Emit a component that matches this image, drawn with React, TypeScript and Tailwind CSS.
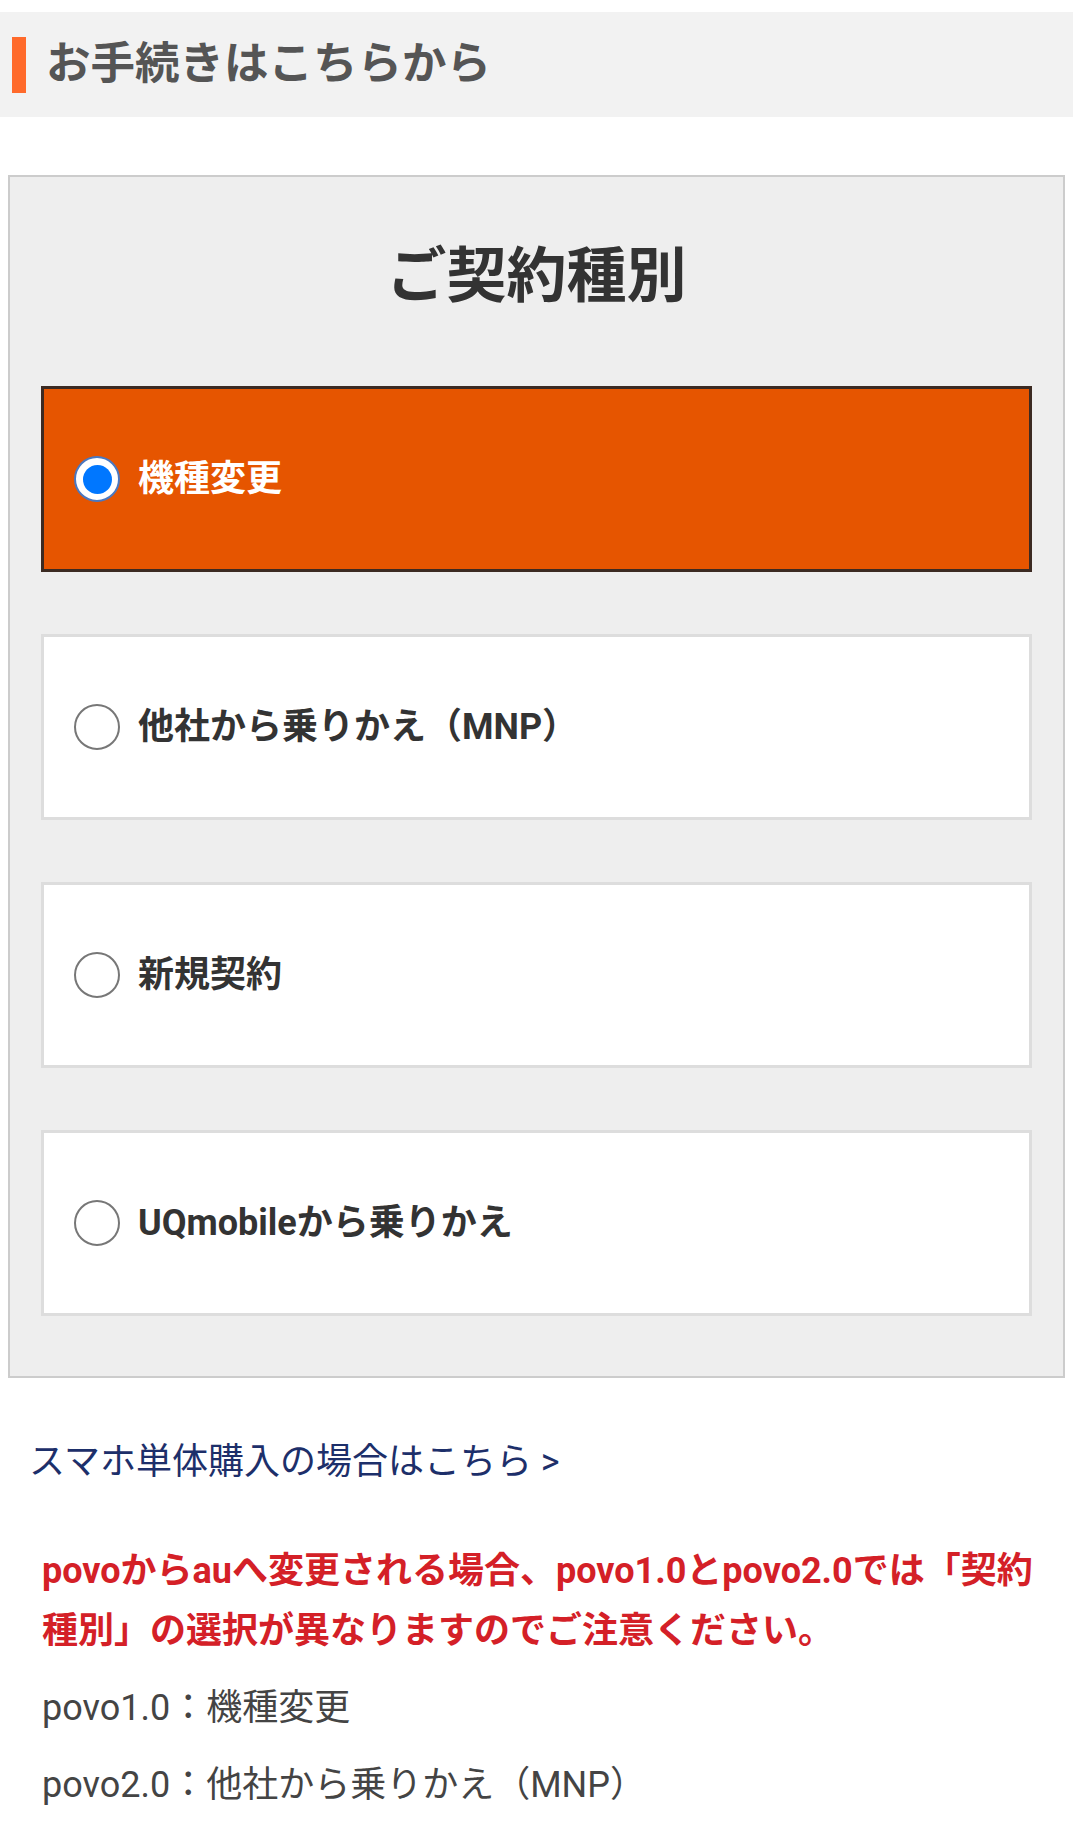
import React from "react";

const font = { fontFamily: 'Roboto, "Noto Sans CJK JP", sans-serif' };

function Radio({ checked }: { checked?: boolean }) {
  if (checked) {
    return (
      <span className="flex h-[46px] w-[46px] shrink-0 items-center justify-center rounded-full border-[2px] border-[#4a78c0] bg-white">
        <span className="h-[29px] w-[29px] rounded-full bg-[#0077ff]" />
      </span>
    );
  }
  return <span className="h-[46px] w-[46px] shrink-0 rounded-full border-[2.5px] border-[#777777] bg-white" />;
}

function Option({ label, checked }: { label: string; checked?: boolean }) {
  return (
    <div
      className={
        checked
          ? "flex h-[186px] items-center gap-[18px] border-[3px] border-[#3b2a22] bg-[#e65500] pl-[30px]"
          : "flex h-[186px] items-center gap-[18px] border-[3px] border-[#dddddd] bg-white pl-[30px]"
      }
    >
      <Radio checked={checked} />
      <span
        className={
          checked
            ? "text-[36px] font-bold leading-none text-white"
            : "text-[36px] font-bold leading-none text-[#333333]"
        }
      >
        {label}
      </span>
    </div>
  );
}

export default function App() {
  return (
    <div className="w-[1073px] bg-white pb-[40px]" style={font}>
      <div className="mt-[12px] flex h-[105px] items-center gap-[20px] bg-[#f2f2f2] pl-[12px]">
        <span className="h-[56px] w-[14px] bg-[#ff6a2b]" />
        <span className="text-[44.5px] font-bold leading-none text-[#555555]">お手続きはこちらから</span>
      </div>

      <div className="mx-[8px] mt-[58px] border-[2px] border-[#cccccc] bg-[#eeeeee] px-[31px] pb-[60px] pt-[60px]">
        <h2 className="mb-[69px] text-center text-[60px] font-bold leading-[80px] text-[#333333]">ご契約種別</h2>
        <div className="flex flex-col gap-[62px]">
          <Option label="機種変更" checked />
          <Option label="他社から乗りかえ（MNP）" />
          <Option label="新規契約" />
          <Option label="UQmobileから乗りかえ" />
        </div>
      </div>

      <div className="mt-[60px] pl-[29px] text-[36px] leading-[48px] text-[#1d2f6a]">
        スマホ単体購入の場合はこちら &gt;
      </div>

      <div className="mt-[55px] pl-[42px] pr-[24px]">
        <p className="text-[36px] font-bold leading-[60px] text-[#d42027]">
          povoからauへ変更される場合、povo1.0とpovo2.0では「契約種別」の選択が異なりますのでご注意ください。
        </p>
        <p className="mt-[17px] text-[36px] leading-[60px] text-[#444444]">povo1.0：機種変更</p>
        <p className="mt-[17px] text-[36px] leading-[60px] text-[#444444]">povo2.0：他社から乗りかえ（MNP）</p>
      </div>
    </div>
  );
}
